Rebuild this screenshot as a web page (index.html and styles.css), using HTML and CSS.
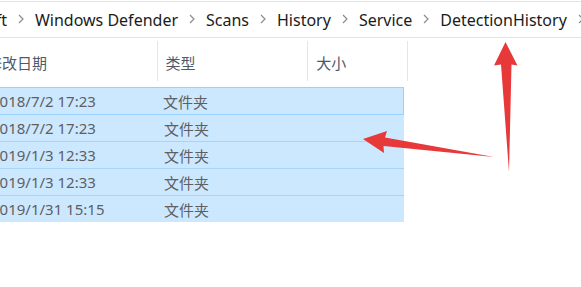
FILE: index.html
```html
<!DOCTYPE html>
<html lang="zh-CN">
<head>
<meta charset="utf-8">
<title>DetectionHistory</title>
<link rel="stylesheet" href="styles.css">
</head>
<body>
<div class="window">
  <nav class="crumbs">
    <span class="crumb crumb-first">Microsoft</span>
    <span class="sep"><svg width="6" height="10" viewBox="0 0 6 10"><polyline points="1,1 5,5 1,9" /></svg></span>
    <span class="crumb">Windows Defender</span>
    <span class="sep"><svg width="6" height="10" viewBox="0 0 6 10"><polyline points="1,1 5,5 1,9" /></svg></span>
    <span class="crumb">Scans</span>
    <span class="sep"><svg width="6" height="10" viewBox="0 0 6 10"><polyline points="1,1 5,5 1,9" /></svg></span>
    <span class="crumb">History</span>
    <span class="sep"><svg width="6" height="10" viewBox="0 0 6 10"><polyline points="1,1 5,5 1,9" /></svg></span>
    <span class="crumb">Service</span>
    <span class="sep"><svg width="6" height="10" viewBox="0 0 6 10"><polyline points="1,1 5,5 1,9" /></svg></span>
    <span class="crumb">DetectionHistory</span>
    <span class="sep"><svg width="6" height="10" viewBox="0 0 6 10"><polyline points="1,1 5,5 1,9" /></svg></span>
  </nav>

  <div class="list">
    <div class="header">
      <div class="hcell col-date">修改日期</div>
      <div class="hcell col-type">类型</div>
      <div class="hcell col-size">大小</div>
    </div>
    <div class="rows">
      <div class="row focused"><div class="cell col-date">2018/7/2 17:23</div><div class="cell col-type">文件夹</div><div class="cell col-size"></div></div>
      <div class="row"><div class="cell col-date">2018/7/2 17:23</div><div class="cell col-type">文件夹</div><div class="cell col-size"></div></div>
      <div class="row"><div class="cell col-date">2019/1/3 12:33</div><div class="cell col-type">文件夹</div><div class="cell col-size"></div></div>
      <div class="row"><div class="cell col-date">2019/1/3 12:33</div><div class="cell col-type">文件夹</div><div class="cell col-size"></div></div>
      <div class="row"><div class="cell col-date">2019/1/31 15:15</div><div class="cell col-type">文件夹</div><div class="cell col-size"></div></div>
    </div>
  </div>

  <svg class="arrows" width="581" height="287" viewBox="0 0 581 287">
    <polygon class="arrow" points="505.5,42 517.5,65.5 511.5,64.5 509,172 501,64.5 494,65.5" />
    <polygon class="arrow" points="363,139 387,131 385,137.5 494,157 383.5,146 384,153" />
  </svg>
</div>
</body>
</html>
```
FILE: styles.css
```css
html, body {
  margin: 0;
  padding: 0;
  background: #ffffff;
}

.window {
  position: relative;
  width: 581px;
  height: 287px;
  overflow: hidden;
  font-family: "Noto Sans", "Noto Sans CJK SC", sans-serif;
}

.crumbs {
  margin-top: 1px;
  height: 35px;
  border-top: 1px solid #e3e3e3;
  border-bottom: 1px solid #e3e3e3;
  display: flex;
  align-items: center;
  white-space: nowrap;
  font-size: 16px;
  color: #1b1b1b;
}

.crumb-first {
  margin-left: -64px;
}

.sep {
  flex: 0 0 28px;
  display: flex;
  justify-content: center;
  align-items: center;
  padding-bottom: 1px;
}

.sep svg polyline {
  fill: none;
  stroke: #8c8c8c;
  stroke-width: 1.2;
}

.list {
  margin-left: -21px;
  width: 429px;
}

.header {
  display: flex;
  height: 40px;
  margin-top: 3px;
  align-items: stretch;
}

.hcell {
  box-sizing: border-box;
  display: flex;
  align-items: center;
  padding-left: 8px;
  padding-top: 3px;
  border-right: 1px solid #e5e5e5;
  font-family: "Noto Sans CJK SC", sans-serif;
  font-size: 15px;
  color: #4d5a6a;
}

.col-date { width: 179px; }
.col-type { width: 151px; }
.col-size { width: 100px; }

.rows {
  margin-top: 6px;
  width: 425px;
}

.row {
  display: flex;
  height: 27px;
  background: #cce8ff;
  border-top: 1px solid #a9d4f5;
  box-sizing: border-box;
}

.row.focused {
  border: 1px solid #99d1ff;
  height: 28px;
}

.row.focused + .row {
  border-top: none;
  height: 26px;
}

.cell {
  box-sizing: border-box;
  display: flex;
  align-items: center;
  padding-left: 8px;
  font-size: 15px;
  color: #5f5f5f;
  white-space: nowrap;
  font-family: "Noto Sans", "Noto Sans CJK SC", sans-serif;
}

.cell.col-date {
  padding-left: 12px;
}

.row.focused .cell.col-date {
  padding-left: 11px;
}

.row .cell.col-type {
  font-family: "Noto Sans CJK SC", sans-serif;
  font-size: 15px;
}

.row.focused .cell.col-type {
  padding-left: 7px;
}

.arrows {
  position: absolute;
  left: 0;
  top: 0;
  pointer-events: none;
}

.arrow {
  fill: #e8393a;
}
```
